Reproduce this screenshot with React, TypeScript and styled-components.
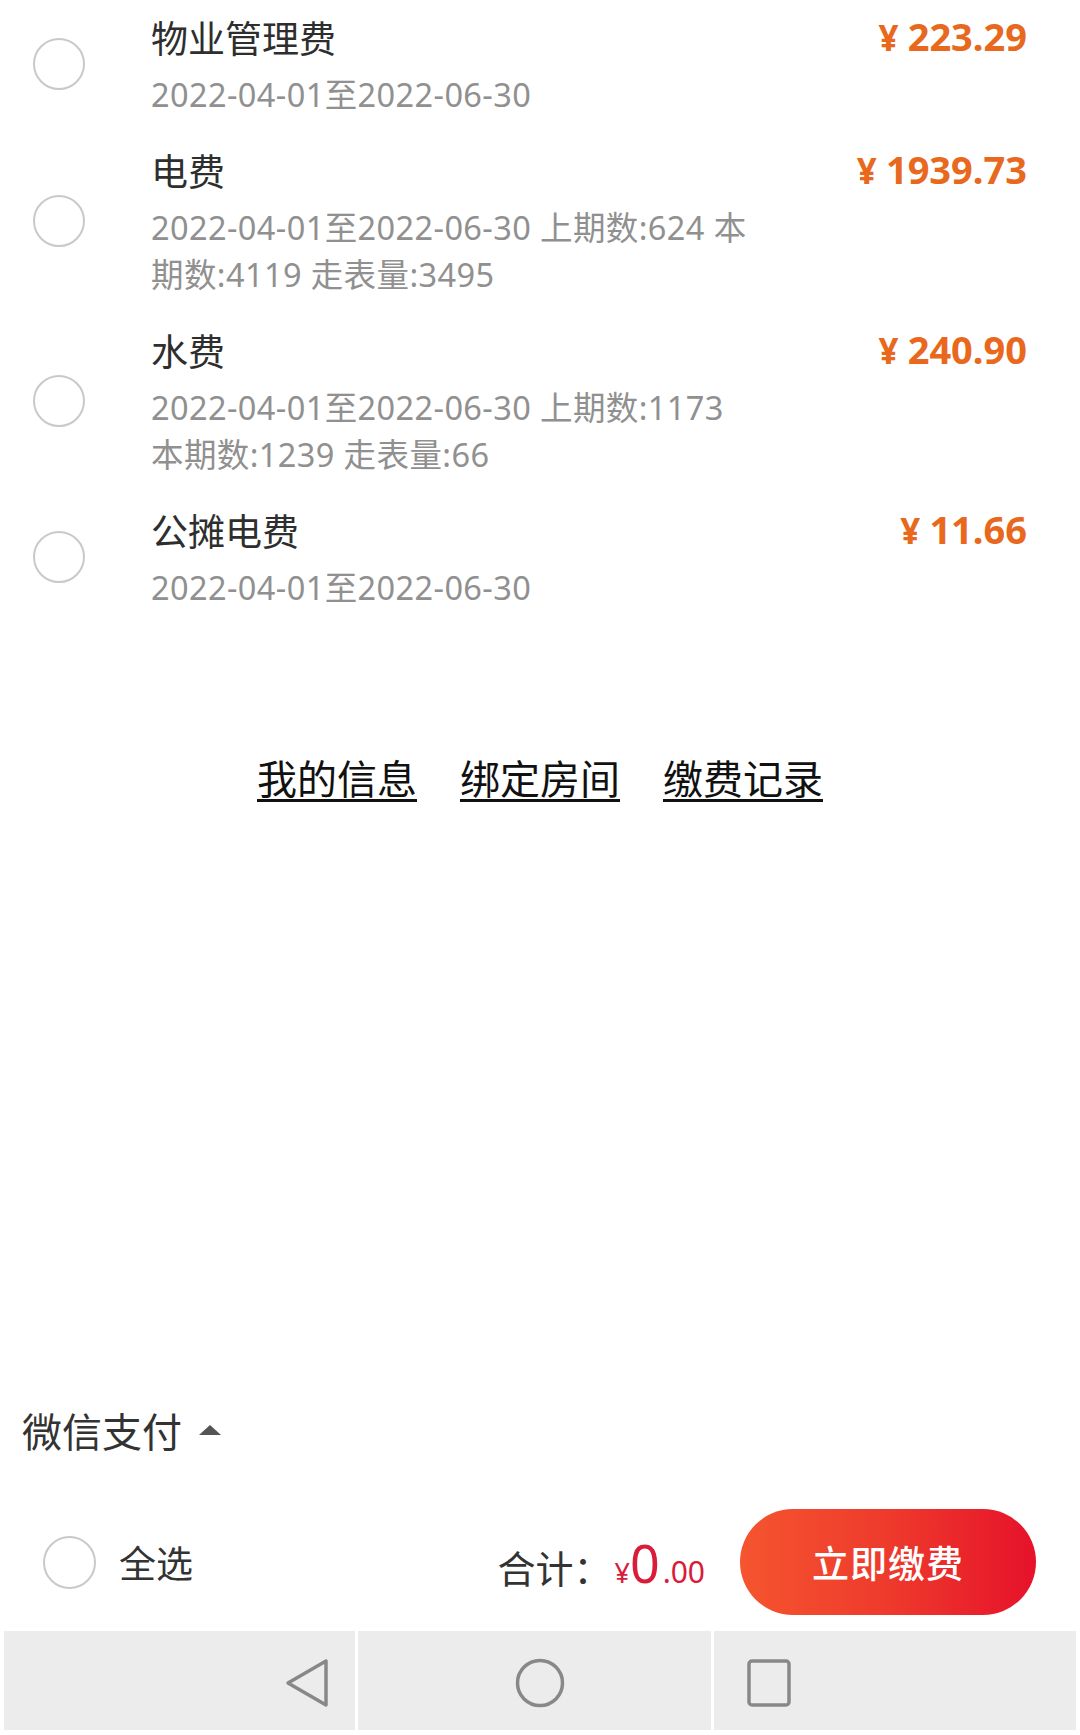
import React from 'react';
import styled, { createGlobalStyle } from 'styled-components';

const GlobalStyle = createGlobalStyle`
  html, body, #root { margin: 0; padding: 0; height: 100%; }
  body {
    background: #ffffff;
    font-family: "Noto Sans", "Noto Sans CJK SC", sans-serif;
    color: #303030;
  }
  * { box-sizing: border-box; }
`;

const Page = styled.div`
  min-height: 100vh;
  display: flex;
  flex-direction: column;
  background: #ffffff;
`;

const List = styled.div`
  display: flex;
  flex-direction: column;
`;

const Row = styled.div`
  display: flex;
  align-items: center;
  padding: 10px 53px 15px 0;
`;

const CheckCell = styled.div`
  flex: 0 0 151px;
  padding-left: 33px;
  display: flex;
  align-items: center;
`;

const Radio = styled.span<{ $size?: number }>`
  display: block;
  width: ${(p) => p.$size ?? 52}px;
  height: ${(p) => p.$size ?? 52}px;
  border-radius: 50%;
  border: 2px solid #c9c9c9;
  background: #fff;
`;

const Body = styled.div`
  flex: 1;
  display: flex;
  justify-content: space-between;
  align-items: flex-start;
`;

const Info = styled.div`
  display: flex;
  flex-direction: column;
`;

const Title = styled.div`
  padding-top: 3px;
  font-size: 37px;
  line-height: 52px;
  color: #2e2e2e;
`;

const Details = styled.div`
  margin-top: 6px;
  display: flex;
  flex-direction: column;
`;

const DetailLine = styled.div`
  font-size: 32.5px;
  line-height: 47px;
  letter-spacing: 0.4px;
  color: #909090;
  white-space: nowrap;
`;

const Amount = styled.div`
  font-size: 38px;
  line-height: 52px;
  font-weight: 700;
  color: #e8691e;
  white-space: nowrap;
`;

const Yen = styled.span`
  font-size: 35px;
  margin-right: 9px;
`;

const LinkBar = styled.nav`
  margin-top: 133px;
  display: flex;
  justify-content: center;
  gap: 43px;
`;

const NavLink = styled.a`
  font-size: 40px;
  line-height: 40px;
  color: #111111;
  text-decoration: none;
  border-bottom: 3px solid #111111;
  cursor: pointer;
`;

const Bottom = styled.div`
  margin-top: auto;
  display: flex;
  flex-direction: column;
`;

const PayMethod = styled.div`
  height: 100px;
  margin-bottom: 17px;
  padding-left: 22px;
  display: flex;
  align-items: center;
  gap: 17px;
  font-size: 40px;
  color: #333333;
`;

const Caret = styled.span`
  width: 0;
  height: 0;
  border-left: 11px solid transparent;
  border-right: 11px solid transparent;
  border-bottom: 10px solid #555555;
`;

const ActionBar = styled.div`
  height: 134px;
  padding: 0 44px 4px 43px;
  display: flex;
  align-items: center;
`;

const SelectAll = styled.label`
  display: flex;
  align-items: center;
  gap: 23px;
  font-size: 37px;
  color: #333333;
`;

const Total = styled.div`
  margin-left: auto;
  margin-right: 35px;
  display: flex;
  align-items: baseline;
  color: #333333;
`;

const TotalLabel = styled.span`
  font-size: 38px;
`;

const Money = styled.span<{ $size: number }>`
  font-size: ${(p) => p.$size}px;
  color: #d81c3a;
  margin-left: ${(p) => (p.$size < 32 && p.$size > 26 ? 3 : 0)}px;
`;

const PayButton = styled.button`
  width: 296px;
  height: 106px;
  border: none;
  border-radius: 53px;
  background: linear-gradient(90deg, #f5552f 0%, #ee3a2c 50%, #e6122a 100%);
  color: #ffffff;
  font-family: "Noto Sans", "Noto Sans CJK SC", sans-serif;
  font-size: 37px;
  font-weight: 500;
  letter-spacing: 1px;
  cursor: pointer;
`;

const SystemBar = styled.div`
  height: 104px;
  padding: 0 4px 5px;
  display: grid;
  grid-template-columns: 351px 353px 1fr;
  gap: 3px;
  background: #ffffff;
`;

const SystemCell = styled.div<{ $justify: string; $pl?: number; $pr?: number }>`
  background: #ececec;
  display: flex;
  align-items: center;
  justify-content: ${(p) => p.$justify};
  padding-left: ${(p) => p.$pl ?? 0}px;
  padding-right: ${(p) => p.$pr ?? 0}px;
  padding-top: 4px;
`;

type Bill = { name: string; lines: string[]; amount: string };

const bills: Bill[] = [
  { name: '物业管理费', lines: ['2022-04-01至2022-06-30'], amount: '223.29' },
  {
    name: '电费',
    lines: ['2022-04-01至2022-06-30 上期数:624 本', '期数:4119 走表量:3495'],
    amount: '1939.73',
  },
  {
    name: '水费',
    lines: ['2022-04-01至2022-06-30 上期数:1173', '本期数:1239 走表量:66'],
    amount: '240.90',
  },
  { name: '公摊电费', lines: ['2022-04-01至2022-06-30'], amount: '11.66' },
];

const BackIcon = () => (
  <svg width="46" height="52" viewBox="0 0 46 52" fill="none">
    <path
      d="M42 4 L42 48 L4 26 Z"
      stroke="#888888"
      strokeWidth="3.5"
      strokeLinejoin="round"
    />
  </svg>
);

const HomeIcon = () => (
  <svg width="50" height="50" viewBox="0 0 50 50" fill="none">
    <circle cx="25" cy="25" r="22.5" stroke="#888888" strokeWidth="3.5" />
  </svg>
);

const RecentIcon = () => (
  <svg width="44" height="48" viewBox="0 0 44 48" fill="none">
    <rect x="2" y="2" width="40" height="44" rx="3" stroke="#888888" strokeWidth="3.5" />
  </svg>
);

export default function App() {
  return (
    <>
      <GlobalStyle />
      <Page>
        <List>
          {bills.map((b) => (
            <Row key={b.name}>
              <CheckCell>
                <Radio />
              </CheckCell>
              <Body>
                <Info>
                  <Title>{b.name}</Title>
                  <Details>
                    {b.lines.map((l) => (
                      <DetailLine key={l}>{l}</DetailLine>
                    ))}
                  </Details>
                </Info>
                <Amount>
                  <Yen>¥</Yen>
                  {b.amount}
                </Amount>
              </Body>
            </Row>
          ))}
        </List>

        <LinkBar>
          <NavLink>我的信息</NavLink>
          <NavLink>绑定房间</NavLink>
          <NavLink>缴费记录</NavLink>
        </LinkBar>

        <Bottom>
          <PayMethod>
            微信支付
            <Caret />
          </PayMethod>
          <ActionBar>
            <SelectAll>
              <Radio $size={53} />
              全选
            </SelectAll>
            <Total>
              <TotalLabel>合计：</TotalLabel>
              <Money $size={27}>¥</Money>
              <Money $size={52}>0</Money>
              <Money $size={30}>.00</Money>
            </Total>
            <PayButton>立即缴费</PayButton>
          </ActionBar>
          <SystemBar>
            <SystemCell $justify="flex-end" $pr={25}>
              <BackIcon />
            </SystemCell>
            <SystemCell $justify="flex-start" $pl={157}>
              <HomeIcon />
            </SystemCell>
            <SystemCell $justify="flex-start" $pl={33}>
              <RecentIcon />
            </SystemCell>
          </SystemBar>
        </Bottom>
      </Page>
    </>
  );
}
